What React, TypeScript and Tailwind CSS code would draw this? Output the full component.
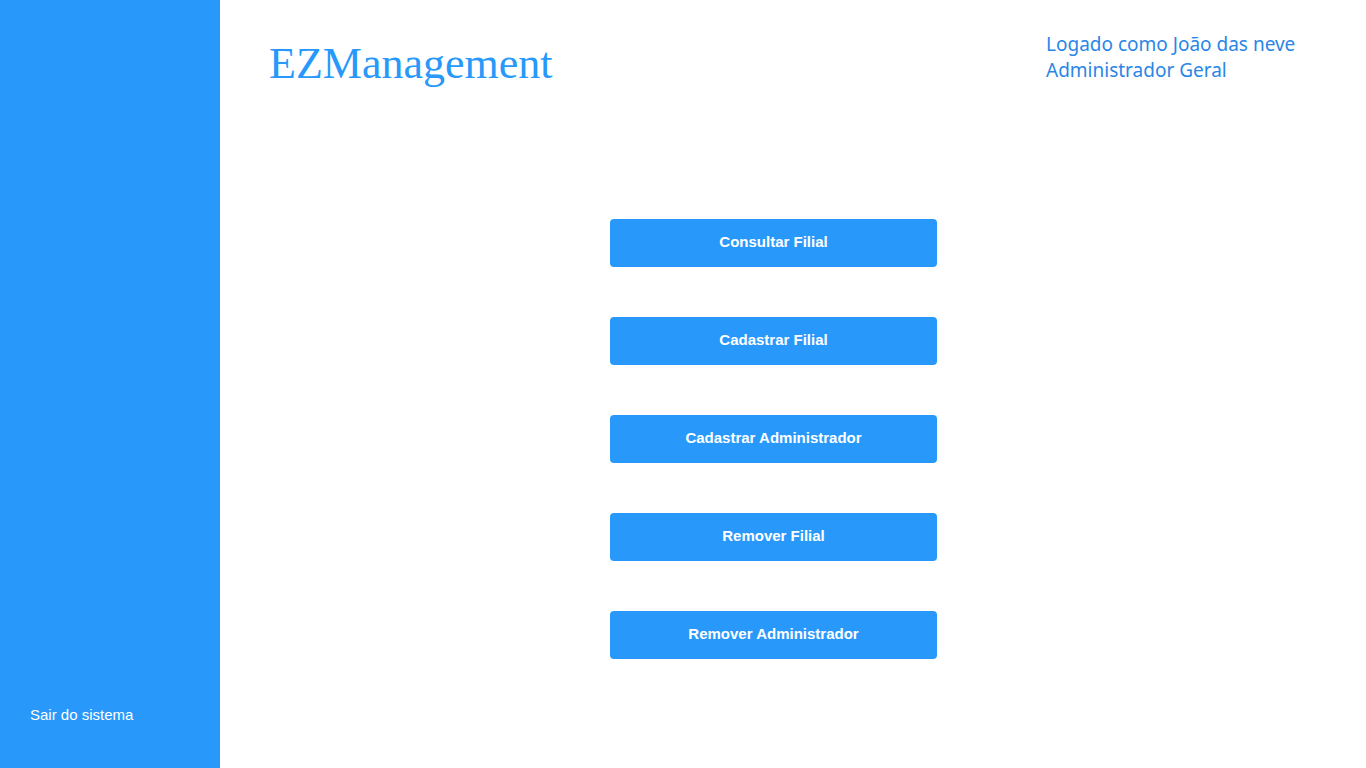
import React from 'react';

const actions = [
  'Consultar Filial',
  'Cadastrar Filial',
  'Cadastrar Administrador',
  'Remover Filial',
  'Remover Administrador',
];

const App: React.FC = () => {
  return (
    <div className="flex h-[768px] w-full bg-white">
      {/* Sidebar */}
      <aside className="flex w-[220px] shrink-0 flex-col justify-end bg-[#2899fb] pb-[42px] pl-[30px]">
        <span className="text-[15px] text-white" style={{ fontFamily: '"Liberation Sans", Arial, sans-serif' }}>
          Sair do sistema
        </span>
      </aside>

      {/* Main */}
      <main className="flex flex-1 flex-col">
        <header className="flex items-start justify-between pl-[49px] pr-[69px] pt-[40px]">
          <h1
            className="text-[44px] leading-[48px] text-[#2899fb]"
            style={{ fontFamily: '"Liberation Serif", Georgia, serif' }}
          >
            EZManagement
          </h1>
          <div
            className="-mt-[9px] w-[251px] text-[19px] leading-[26px] text-[#2a86e6]"
            style={{ fontFamily: '"Noto Sans", "Segoe UI", sans-serif' }}
          >
            <div>Logado como João das neve</div>
            <div>Administrador Geral</div>
          </div>
        </header>

        <div className="ml-[390px] mt-[131px] flex flex-col gap-[50px]">
          {actions.map((label) => (
            <button
              key={label}
              className="h-[48px] w-[327px] rounded-[4px] bg-[#2899fb] pb-[2px] text-[15px] font-bold text-white"
              style={{ fontFamily: '"Liberation Sans", Arial, sans-serif' }}
            >
              {label}
            </button>
          ))}
        </div>
      </main>
    </div>
  );
};

export default App;
